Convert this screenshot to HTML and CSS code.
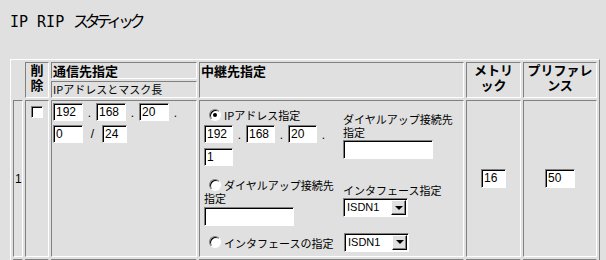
FILE: index.html
```html
<!DOCTYPE html>
<html lang="ja">
<head>
  <meta charset="UTF-8" />
  <title>IP RIP スタティック</title>
  <link rel="stylesheet" href="styles.css">
</head>
<body>
  <div class="title"><span class="latin">IP RIP</span><span class="kana">スタティック</span></div>

  <table class="rip-table">
    <tr>
      <td class="blank w-num" rowspan="2"></td>
      <th class="w-del two-line" rowspan="2">削<br>除</th>
      <th class="w-dest">通信先指定</th>
      <th class="w-relay" rowspan="2">中継先指定</th>
      <th class="w-metric two-line" rowspan="2">メトリ<br>ック</th>
      <th class="w-pref two-line" rowspan="2">プリファレ<br>ンス</th>
    </tr>
    <tr>
      <td class="sub">IPアドレスとマスク長</td>
    </tr>

    <tr class="data-row">
      <td class="num">1</td>
      <td class="del"><span class="check"></span></td>
      <td class="dest">
        <div class="ip-line">
          <span class="field w30">192</span><span class="dot">.</span>
          <span class="field w30">168</span><span class="dot">.</span>
          <span class="field w30">20</span><span class="dot">.</span>
        </div>
        <div class="ip-line">
          <span class="field w30">0</span><span class="slash">/</span>
          <span class="field w25">24</span>
        </div>
      </td>
      <td class="relay">
        <div class="relay-grid">
          <div class="opt">
            <div class="radio-line"><span class="radio on"></span><span>IPアドレス指定</span></div>
            <div class="ip-line">
              <span class="field w29">192</span><span class="dot">.</span>
              <span class="field w29">168</span><span class="dot">.</span>
              <span class="field w29">20</span><span class="dot">.</span>
            </div>
            <div class="ip-line">
              <span class="field w29">1</span>
            </div>
          </div>
          <div class="side">
            <div class="label">ダイヤルアップ接続先<br>指定</div>
            <span class="field tall w90"></span>
          </div>

          <div class="opt">
            <div class="radio-line"><span class="radio"></span><span>ダイヤルアップ接続先</span></div>
            <div class="label">指定</div>
            <span class="field tall w90 gap-top"></span>
          </div>
          <div class="side">
            <div class="label">インタフェース指定</div>
            <span class="select"><span class="val">ISDN1</span><span class="arrow"></span></span>
          </div>

          <div class="opt">
            <div class="radio-line"><span class="radio"></span><span>インタフェースの指定</span></div>
          </div>
          <div class="side side-sel">
            <span class="select"><span class="val">ISDN1</span><span class="arrow"></span></span>
          </div>
        </div>
      </td>
      <td class="metric"><span class="field tall w25">16</span></td>
      <td class="metric"><span class="field tall w30">50</span></td>
    </tr>

    <tr class="next-row">
      <td></td><td></td><td></td><td></td><td></td><td></td>
    </tr>
  </table>
</body>
</html>
```

FILE: styles.css
```css
body {
  margin: 0;
  padding: 10px 8px 0 10px;
  background: #e0e0e0;
  color: #000;
  font-family: "Noto Sans CJK JP", sans-serif;
  font-size: 11px;
  overflow: hidden;
}
.title {
  display: flex;
  align-items: baseline;
  height: 20px;
  margin-bottom: 30px;
  line-height: 20px;
  white-space: nowrap;
}
.title .latin {
  width: 63px;
  font-family: "DejaVu Sans Mono", monospace;
  font-size: 15px;
}
.title .kana {
  font-family: "Noto Sans CJK JP", sans-serif;
  font-size: 16px;
  letter-spacing: -4.5px;
}

/* main table, old-style 3d borders */
.rip-table {
  table-layout: fixed;
  width: 590px;
  border-spacing: 2px;
  border: 1px solid;
  border-color: #fff #808080 #808080 #fff;
  margin-top: -1px;
}
.rip-table th, .rip-table td {
  box-sizing: border-box;
  padding: 1px;
  border: 1px solid;
  border-color: #808080 #fff #fff #808080;
  vertical-align: top;
  text-align: left;
}
.rip-table th {
  font-size: 13px;
  font-weight: bold;
  line-height: 13px;
}
.rip-table td.blank { border: none; }
.w-num { width: 10px; }
.w-del { width: 24px; }
.w-dest { width: 146px; }
.w-relay { width: 265px; }
.w-metric { width: 55px; }
.w-pref { width: 74px; }
.rip-table th.two-line {
  padding: 0 1px;
  font-family: "Liberation Sans", "Noto Sans CJK JP", sans-serif;
  line-height: 15px;
  text-align: center;
}
.rip-table td.sub { line-height: 13px; }

/* data row */
.data-row td.num, .data-row td.metric { vertical-align: middle; }
.num {
  font-family: "Liberation Sans", sans-serif;
  font-size: 12px;
}
.check {
  display: block;
  box-sizing: border-box;
  width: 12px;
  height: 12px;
  margin: 4px auto 0;
  border: 1px solid;
  border-color: #808080 #fff #fff #808080;
  box-shadow: inset 1px 1px #000;
  background: #fff;
}
.field {
  display: block;
  box-sizing: border-box;
  height: 18px;
  padding: 0 1px 0 2px;
  border: 1px solid;
  border-color: #808080 #fff #fff #808080;
  box-shadow: inset 1px 1px #000;
  background: #fff;
  font-family: "Liberation Sans", sans-serif;
  font-size: 12px;
  line-height: 16px;
}
.field.tall { height: 19px; line-height: 17px; }
.w25 { width: 25px; }
.w29 { width: 29px; }
.w30 { width: 30px; }
.w90 { width: 90px; }
.gap-top { margin-top: 1px; }
.metric .field { margin: 0 auto; }

.ip-line {
  display: flex;
  margin-bottom: 3px;
}
.dest .ip-line:first-child { margin-top: 1px; }
.dot, .slash {
  font-family: "Liberation Sans", sans-serif;
  font-size: 12px;
  line-height: 18px;
  text-align: center;
}
.dot { width: 13px; padding-top: 1px; }
.slash { width: 19px; }

/* relay block: two columns of options */
.relay-grid {
  display: grid;
  grid-template-columns: 136px 1fr;
  grid-template-rows: 62px 68px 14px;
  column-gap: 3px;
  align-items: center;
  padding: 3px 2px 6px 3px;
}
.relay-grid .ip-line { margin: 2px 0 0; }
.relay-grid .ip-line + .ip-line { margin-top: 4px; }
.radio-line {
  display: flex;
  align-items: center;
  height: 17px;
  line-height: 13px;
}
.radio-line span:last-child { padding-top: 2px; }
.radio {
  position: relative;
  box-sizing: border-box;
  flex: none;
  width: 12px;
  height: 12px;
  margin: 0 3px 0 5px;
  border: 1px solid;
  border-color: #808080 #fff #fff #808080;
  border-radius: 50%;
  box-shadow: inset 1px 1px #000;
  background: #fff;
}
.radio.on::after {
  content: "";
  position: absolute;
  left: 3px;
  top: 3px;
  width: 4px;
  height: 4px;
  border-radius: 50%;
  background: #000;
}
.label {
  font-family: "Liberation Sans", "Noto Sans CJK JP", sans-serif;
  line-height: 13px;
}

.select {
  display: flex;
  box-sizing: border-box;
  width: 65px;
  height: 19px;
  padding: 1px 1px 1px 2px;
  border: 1px solid;
  border-color: #808080 #fff #fff #808080;
  box-shadow: inset 1px 1px #000;
  background: #fff;
}
.select .val {
  flex: 1;
  padding-left: 1px;
  font-family: "Liberation Sans", sans-serif;
  font-size: 11px;
  line-height: 15px;
}
.select .arrow {
  display: flex;
  align-items: center;
  justify-content: center;
  box-sizing: border-box;
  width: 15px;
  border: 1px solid;
  border-color: #fff #000 #000 #fff;
  box-shadow: inset -1px -1px #808080;
  background: #e0e0e0;
}
.select .arrow::after {
  content: "";
  border-top: 4px solid #000;
  border-left: 4px solid transparent;
  border-right: 4px solid transparent;
}
.side-sel .select { margin-left: 1px; }

.next-row td { height: 20px; }
```
